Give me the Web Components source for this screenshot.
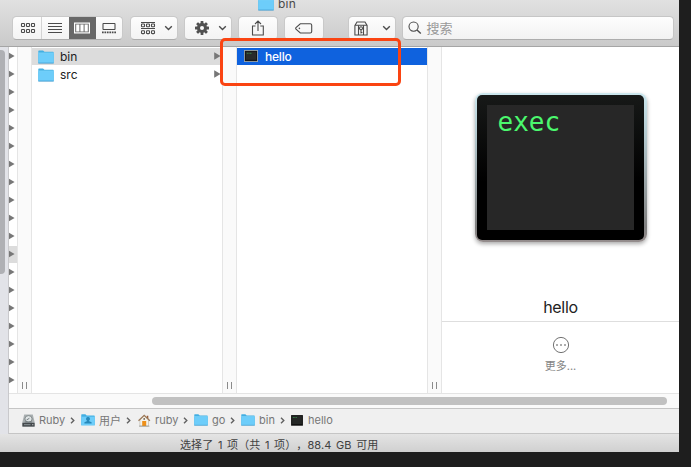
<!DOCTYPE html>
<html lang="zh-CN">
<head>
<meta charset="utf-8">
<title>bin</title>
<style>
html,body{margin:0;width:691px;height:467px;overflow:hidden;background:#1e1e1e;font-family:Inter,"Noto Sans CJK SC",sans-serif}
</style>
</head>
<body>
<finder-window></finder-window>
<script>
const define = (name, html, setup) => customElements.define(name, class extends HTMLElement {
  connectedCallback() {
    if (this.shadowRoot) return;
    const t = document.createElement('template');
    t.innerHTML = typeof html === 'function' ? html(this) : html;
    this.attachShadow({mode: 'open'}).append(t.content.cloneNode(true));
    if (setup) setup(this);
  }
});

const cells = (xs, ys, w, h) => ys.map(y => xs.map(x => `<rect x="${x}" y="${y}" width="${w}" height="${h}" rx=".6"/>`).join('')).join('');
const S = 'fill="none" stroke="#4b4b4b" stroke-width="1.1"';
const icons = {
  grid: [16, 12, `<g ${S}>${cells([1.5, 6.5, 11.5], [1.5, 7.5], 3, 3)}</g>`],
  list: [14, 12, `<path d="M0 1.5H14M0 4.5H14M0 7.5H14M0 10.5H14" ${S}/>`],
  columns: [16, 12, `<rect x=".6" y="1.1" width="14.8" height="9.8" fill="none" stroke="#fff" stroke-width="1.2"/><path d="M2.2 2.6h3.2v6.8h-3.2zM6.4 2.6h3.2v6.8h-3.2zM10.6 2.6h3.2v6.8h-3.2z" fill="#fff"/>`],
  gallery: [14, 12, `<rect x="1" y="1.5" width="12" height="6" rx=".4" ${S}/><path d="M0 10.3H14" fill="none" stroke="#4b4b4b" stroke-width="1.8" stroke-dasharray="1.7 .76"/>`],
  group: [16, 14, `<g ${S}><path d="M1 1.5H15M1 7.5H15"/>${cells([1.5, 6.5, 11.5], [3, 9.8], 3, 2.8)}</g>`],
  gear: [16, 16, `<g fill="#505050">${[0, 45, 90, 135].map(a => `<rect x="6.6" y="1" width="2.8" height="14" rx=".5" transform="rotate(${a} 8 8)"/>`).join('')}</g><circle cx="8" cy="8" r="3.5" fill="none" stroke="#505050" stroke-width="3"/><circle cx="8" cy="8" r="2" fill="#f8f8f8"/>`],
  share: [14, 16, `<path d="M4.5 6H1.5V15H12.3V6H9.3M7 11V1.2M4 4L7 1L10 4" ${S}/>`],
  tag: [18, 11, `<path d="M5.3 .8H15.2Q16.7 .8 16.7 2.3V8.5Q16.7 10 15.2 10H5.3L1 6.2Q.4 5.4 1 4.6Z" ${S}/><circle cx="4.4" cy="5.4" r=".8" fill="#555"/>`],
  vault: [14, 15, `<path d="M.9 4.5L3 1H11L13.1 4.5V14H.9ZM.9 4.2H13.1" ${S}/><path d="M4.5 4.2V14M9.5 4.2V14" ${S}/><circle cx="7" cy="7.3" r="1.5" ${S}/><path d="M7 8.8V12.6M7 11.5H8.4" ${S}/>`],
  chevron: [9, 6, `<path d="M1.2 1.2L4.5 4.4L7.8 1.2" fill="none" stroke="#4b4b4b" stroke-width="1.4"/>`],
  search: [14, 14, `<circle cx="5.6" cy="5.6" r="4.6" ${S}/><path d="M9 9L12.8 12.6" fill="none" stroke="#4b4b4b" stroke-width="1.4"/>`],
  folder: [16, 14, `<path d="M.3 1Q.3 .4 1 .4H5L6.5 1.7H15Q15.7 1.7 15.7 2.4V13H.3Z" fill="#43afe2"/><path d="M.3 3.1H15.7V12.8H.3Z" fill="#6dcdfa"/><path d="M.3 2.9H15.7" stroke="#8cdcff" stroke-width=".6"/><path d="M.3 13.2H15.7" stroke="#4ca3d3" stroke-width=".9"/>`],
  users: [16, 14, `<path d="M.3 1Q.3 .4 1 .4H5L6.5 1.7H15Q15.7 1.7 15.7 2.4V13H.3Z" fill="#43afe2"/><path d="M.3 3.1H15.7V13.2H.3Z" fill="#6dcdfa"/><path d="M8 3.6a2.1 2.1 0 0 1 1.4 3.8v1l2.7 1.2v1.6H3.9V9.6l2.7-1.2v-1A2.1 2.1 0 0 1 8 3.6Z" fill="#2789bb"/>`],
  terminal: [14, 12, `<rect x=".4" y=".4" width="13.2" height="11.2" fill="#161616" stroke="#a3aaaa" stroke-width=".9"/><rect x="1.9" y="1.8" width="10.2" height="8" fill="#292b2a"/><path d="M2.8 3.3H8" stroke="#388a48" stroke-width=".9" stroke-dasharray="1.2 .4"/>`],
  terminalSmall: [12, 11, `<rect x=".1" y=".1" width="11.8" height="10.6" fill="#0c0c0c"/><rect x="1.1" y="1.1" width="9.8" height="8.1" fill="#252726"/><path d="M1.8 2.5H6" stroke="#38844a" stroke-width=".9" stroke-dasharray="1.1 .4"/>`],
  disk: [13, 13, `<path d="M2.2 .4H10.8L12.6 8V12.6H.4V8Z" fill="#a9afb1"/><path d="M.4 8.8H12.6V12.6H.4Z" fill="#44494c"/><ellipse cx="6.5" cy="4.9" rx="3.6" ry="3.3" fill="#dfe4e5" stroke="#6e7779" stroke-width=".8"/><path d="M4.5 6L7.4 4.3M2.8 8H10" stroke="#667074" stroke-width=".9"/><path d="M2 10.7H8.5" stroke="#8c9699" stroke-width="1"/><circle cx="10.8" cy="10.7" r=".6" fill="#cfd5d6"/>`],
  home: [14, 13, `<path d="M2.9 6L7.2 2L11.5 6V12H2.9Z" fill="#f5f2e9" stroke="#b7b2a5" stroke-width=".6"/><path d="M9.8 1.7H11.3V5L9.8 4Z" fill="#9a5a35"/><path d="M1.5 6.8L7.2 1.3L12.9 6.8" fill="none" stroke="#9c7958" stroke-width="1.2"/><rect x="5.2" y="7" width="4" height="5" fill="#ee8f18"/><circle cx="7.2" cy="4.9" r=".9" fill="#675e52"/><path d="M2 12.2H12.4" stroke="#8c8b86" stroke-width=".7"/>`],
  more: [18, 18, `<circle cx="9" cy="9" r="7.6" fill="none" stroke="#737373" stroke-width="1"/><path d="M4.2 8.2h1.6v1.6H4.2zM8.2 8.2h1.6v1.6H8.2zM12.2 8.2h1.6v1.6H12.2z" fill="#777"/>`],
  arrow: [7, 8, `<path d="M.2 .2L6.6 4L.2 7.8Z" fill="#777"/>`],
  crumb: [5, 7, `<path d="M1 .7L3.8 3.5L1 6.3" fill="none" stroke="#626262" stroke-width="1.4"/>`]
};
define('finder-icon', el => {
  const [w, h, body] = icons[el.getAttribute('name')];
  const W = el.getAttribute('w') || w, H = el.getAttribute('h') || h;
  return `<style>:host{display:block;flex:none;width:${W}px;height:${H}px}svg{display:block}</style><svg width="${W}" height="${H}" viewBox="0 0 ${w} ${h}" preserveAspectRatio="none">${body}</svg>`;
});

define('tool-button', `<style>
:host{display:flex;box-sizing:border-box;height:24px;flex:none;align-items:center;justify-content:center;border:1px solid #c9c9c9;border-bottom-color:#adadad;border-radius:4.5px;background:linear-gradient(#fdfdfd,#f3f3f3);overflow:hidden}
:host([menu]){justify-content:space-between;padding:0 4px 0 9px}
</style><slot></slot>`);

define('view-switch', `<style>
:host{display:flex;flex:none}
tool-button{width:111px}
span{display:flex;align-items:center;justify-content:center;height:24px;flex:1}
.on{flex:none;width:27px;background:#686868}
.one{flex:none;width:28px;border-right:1px solid #d4d4d4}
.one finder-icon{margin-left:1px}
</style><tool-button><span class="one"><finder-icon name="grid"></finder-icon></span><span><finder-icon name="list"></finder-icon></span><span class="on"><finder-icon name="columns"></finder-icon></span><span><finder-icon name="gallery"></finder-icon></span></tool-button>`);

define('search-field', `<style>
:host{display:flex;box-sizing:border-box;width:271.5px;height:24px;align-items:center;padding-left:4.5px;gap:5px;border:1px solid #c6c6c6;border-bottom-color:#adadad;border-radius:4.5px;background:linear-gradient(#fdfdfd,#f2f2f2);color:#999;font-size:13px;line-height:20px}
</style><finder-icon name="search"></finder-icon><slot></slot>`);

define('finder-toolbar', `<style>
:host{display:flex;flex-direction:column;box-sizing:border-box;height:47px;border-bottom:1px solid #a5a5a5;background:linear-gradient(#e1e1e1,#cacaca)}
.title{display:flex;height:16px;padding-left:258px;gap:4px;color:#494949;font-size:12px;line-height:12px}
.title finder-icon{margin-top:-3px}.title b{font-weight:400;margin-top:-2px;letter-spacing:.25px}
.tools{display:flex;padding-left:12px}
</style>
<div class="title"><finder-icon name="folder"></finder-icon><b>bin</b></div>
<div class="tools">
<view-switch></view-switch>
<tool-button menu style="width:48px;margin-left:7px"><finder-icon name="group"></finder-icon><finder-icon name="chevron"></finder-icon></tool-button>
<tool-button menu style="width:48px;margin-left:6px"><finder-icon name="gear"></finder-icon><finder-icon name="chevron"></finder-icon></tool-button>
<tool-button style="width:40px;margin-left:6px"><finder-icon name="share"></finder-icon></tool-button>
<tool-button style="width:40px;margin-left:6px"><finder-icon name="tag"></finder-icon></tool-button>
<tool-button menu style="width:48px;margin-left:24px;padding-left:5px"><finder-icon name="vault"></finder-icon><finder-icon name="chevron"></finder-icon></tool-button>
<search-field style="margin-left:6px">搜索</search-field>
</div>`);

define('file-row', el => `<style>
:host{display:flex;align-items:center;height:17px;margin-bottom:1px;padding-left:6px;color:#202020;font-size:12px;line-height:17px}
:host([current]){background:#dcdcdc}
:host([selected]){background:#0f62de;color:#fff;font-weight:500;letter-spacing:-.2px}
:host([selected]) .i{box-sizing:border-box;padding-left:1px;margin-top:-1px}
.i{width:22px}.t{flex:1}
.a{margin:-1px 1px 0 0}
</style><span class="i"><finder-icon name="${el.getAttribute('icon')}"></finder-icon></span><span class="t"><slot></slot></span>${el.hasAttribute('leaf') ? '' : '<finder-icon class="a" name="arrow"></finder-icon>'}`);

define('column-gutter', `<style>
:host{display:flex;box-sizing:border-box;width:15px;flex:none;border:solid #e5e5e5;border-width:0 1px;background:#fafafa;align-items:flex-end;justify-content:center;gap:3px;padding-bottom:4px}
i{width:1px;height:7px;background:#8b8b8b}
</style><i></i><i></i>`);

define('parent-column', `<style>
:host{display:flex;flex-direction:column;width:8px;flex:none;padding-top:1px}
div{display:flex;box-sizing:border-box;height:17px;margin-bottom:1px;padding-top:4px}
.on{background:#dcdcdc}
finder-icon{margin-left:-1px}
</style>${Array.from({length: 19}, (_, i) => `<div class="${i === 11 ? 'on' : ''}"><finder-icon name="arrow"></finder-icon></div>`).join('')}`);

define('browser-column', `<style>:host{display:block;width:190px;flex:none;padding-top:1px}</style><slot></slot>`);

define('exec-icon', `<style>
:host{display:block;box-sizing:border-box;width:172px;height:149px;padding:2px 2.5px;border-radius:8px;background:linear-gradient(#cbe7ee,#b3c8ce 30%,#808080 90%,#958d8d);box-shadow:0 2px 4px #0005}
.bezel{box-sizing:border-box;height:100%;padding:10px;border-radius:5px;background:linear-gradient(#171918,#000 60%)}
.screen{box-sizing:border-box;height:125px;padding:1px 0 0 10.5px;background:#272727;color:#4bf86e;font:26px/32px "DejaVu Sans Mono",monospace}
</style><div class="bezel"><div class="screen">exec</div></div>`);

define('preview-pane', `<style>
:host{display:flex;flex-direction:column;align-items:center;flex:1;padding-top:46px}
.name{box-sizing:border-box;width:100%;height:37px;margin-top:43px;border-bottom:1px solid #dedede;text-align:center;font-size:16px;line-height:45px;color:#222;letter-spacing:-.3px}
finder-icon{margin-top:14px}
.more{font-size:11px;line-height:16px;color:#858585;margin-top:4px}
</style><exec-icon></exec-icon><div class="name">hello</div><finder-icon name="more"></finder-icon><div class="more">更多...</div>`);

define('path-crumb', el => `<style>
:host{display:flex;align-items:center;flex:none;box-sizing:border-box;width:${el.getAttribute('width')}px;color:#777;font-size:11px}
.i{width:${el.getAttribute('lead') || 18}px}.t{flex:1;white-space:nowrap}
.e{margin-right:6px}
</style><span class="i"><finder-icon name="${el.getAttribute('icon')}"${/folder|users/.test(el.getAttribute('icon')) ? ' w="14" h="12"' : ''}></finder-icon></span><span class="t"><slot></slot></span>${el.hasAttribute('last') ? '' : '<finder-icon class="e" name="crumb"></finder-icon>'}`);

define('path-bar', `<style>
:host{display:flex;box-sizing:border-box;height:26px;padding:0 0 2px 13px;border:solid #c5c5c5;border-width:1px 0;background:#f0f0f0}
</style>
<path-crumb icon="disk" width="59" lead="17">Ruby</path-crumb>
<path-crumb icon="users" width="56">用户</path-crumb>
<path-crumb icon="home" width="57">ruby</path-crumb>
<path-crumb icon="folder" width="47">go</path-crumb>
<path-crumb icon="folder" width="50">bin</path-crumb>
<path-crumb icon="terminalSmall" width="60" lead="17" last>hello</path-crumb>`);

define('h-scroller', `<style>
:host{display:flex;box-sizing:border-box;height:15px;border-top:1px solid #e4e4e4;background:#fafafa;padding:3px 12px 0 143px}
i{flex:1;height:8px;border-radius:4px;background:#c1c1c1}
</style><i></i>`);

define('finder-sidebar', `<style>
:host{display:block;box-sizing:border-box;width:9px;flex:none;padding-top:3px;background:#e2e3e8;border-right:1px solid #c9c9cc}
i{display:block;width:5px;height:224px;border-radius:0 4px 4px 0;background:#afb0b4}
</style><i></i>`);

define('status-bar', `<style>
:host{display:block;box-sizing:border-box;height:18px;padding-left:180px;background:linear-gradient(#e4e4e4,#d0d0d0);color:#414141;font-size:11px;line-height:22px;white-space:pre;letter-spacing:.1px;word-spacing:1.4px;text-spacing-trim:space-all}
</style><slot></slot>`);

define('highlight-box', `<style>
:host{position:absolute;box-sizing:border-box;left:220px;top:38px;width:181px;height:48px;border:3px solid #fa4412;border-radius:5px}
</style>`);

define('finder-window', `<style>
:host{display:block;width:679px;height:452px;overflow:hidden;background:#fff}
.body{display:flex;height:387px}
.main{flex:1;display:flex;flex-direction:column}
.cols{flex:1;display:flex;min-height:0;overflow:hidden}
</style>
<finder-toolbar></finder-toolbar>
<div class="body"><finder-sidebar></finder-sidebar>
<div class="main"><div class="cols">
<parent-column></parent-column><column-gutter></column-gutter>
<browser-column><file-row icon="folder" current>bin</file-row><file-row icon="folder">src</file-row></browser-column>
<column-gutter></column-gutter>
<browser-column><file-row icon="terminal" selected leaf>hello</file-row></browser-column>
<column-gutter></column-gutter>
<preview-pane></preview-pane>
</div><h-scroller></h-scroller><path-bar></path-bar></div></div>
<status-bar>选择了 1 项（共 1 项），88.4 GB 可用</status-bar>
<highlight-box></highlight-box>`);
</script>
</body>
</html>
